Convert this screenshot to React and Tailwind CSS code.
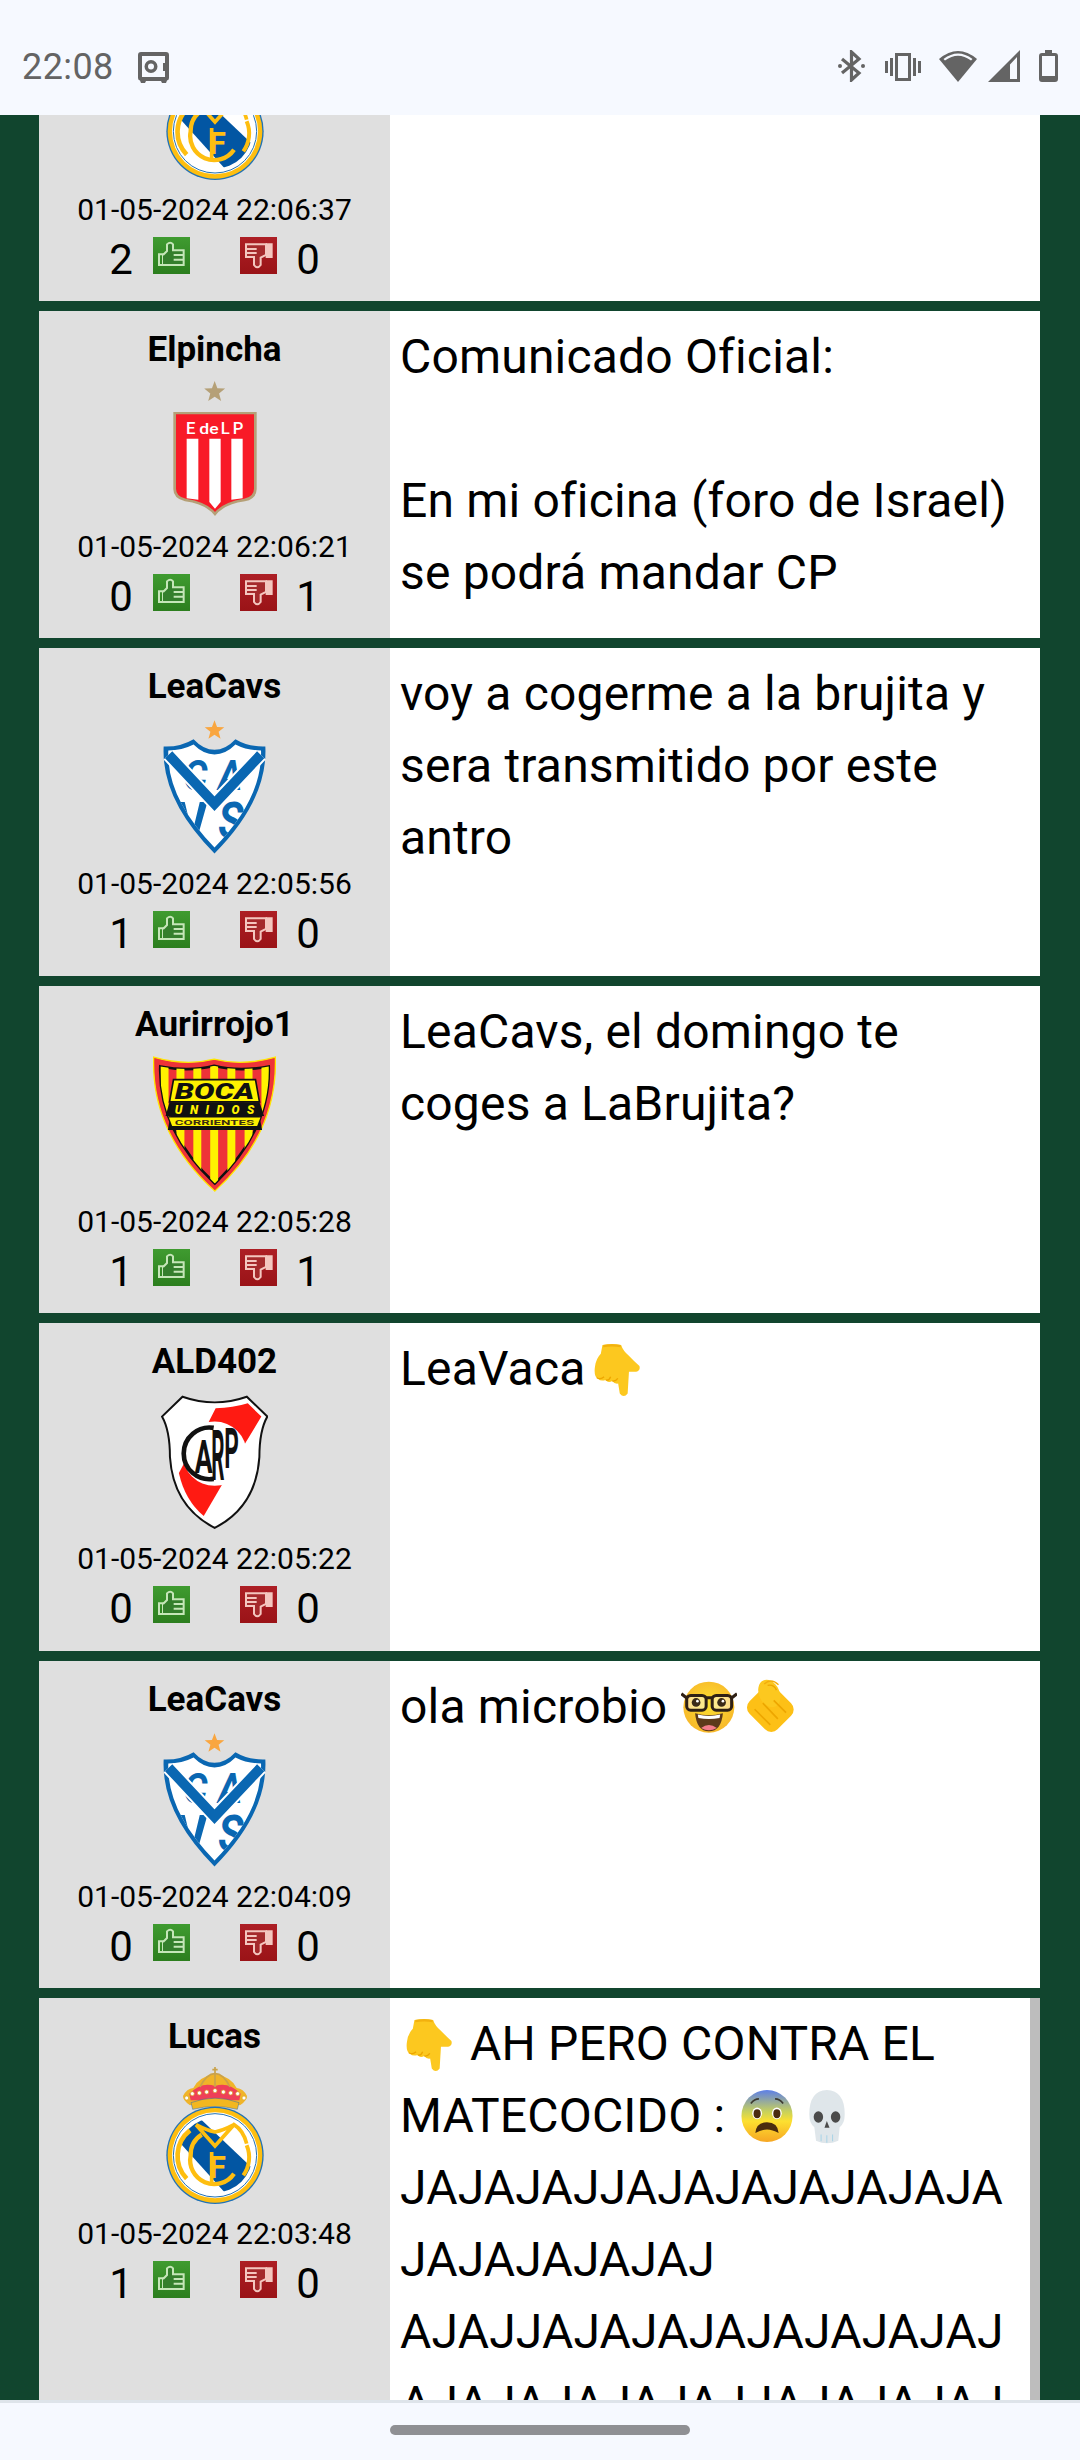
const starPts = (cx, cy, r) => {
  const p = [];
  for (let i = 0; i < 10; i++) {
    const a = -Math.PI / 2 + (i * Math.PI) / 5;
    const q = i % 2 ? r * 0.42 : r;
    p.push(`${(cx + q * Math.cos(a)).toFixed(1)},${(cy + q * Math.sin(a)).toFixed(1)}`);
  }
  return p.join(" ");
};

function RealMadrid() {
  return (
    <svg width="98" height="137" viewBox="408 205 294 411" className="block">
      <defs>
        <clipPath id="rmc"><circle cx="555" cy="470" r="112" /></clipPath>
      </defs>
      <path d="M480 320 Q458 305 459 292 Q470 270 490 268 Q505 235 555 225 Q605 235 620 268 Q640 270 651 292 Q652 305 630 320 Q555 300 480 320Z" fill="#f0b429" />
      <path d="M478 285 Q515 248 555 262 Q595 248 632 285 L628 305 L482 305Z" fill="#ef4058" />
      <path d="M510 265 Q530 225 555 225 Q580 225 600 265 M555 225 V265" fill="none" stroke="#c9a24a" strokeWidth="5" />
      <path d="M555 205 v20 M547 213 h16" stroke="#c9a24a" strokeWidth="5" />
      {[470, 487, 508, 530, 555, 580, 602, 623, 642].map((x, i) => (
        <circle key={x} cx={x} cy={[298, 285, 283, 280, 276, 280, 283, 285, 298][i]} r="6" fill="#fff" stroke="#d9a520" strokeWidth="2" />
      ))}
      <path d="M483 312 Q555 285 627 312 L622 332 Q555 315 488 332Z" fill="#f3b71f" stroke="#2f6ba8" strokeWidth="1.5" />
      <circle cx="555" cy="470" r="146" fill="#2272b5" />
      <circle cx="555" cy="470" r="142" fill="#febe10" />
      <circle cx="555" cy="470" r="129" fill="#fff" />
      <circle cx="555" cy="470" r="125" fill="none" stroke="#2272b5" strokeWidth="3" />
      <g clipPath="url(#rmc)">
        <path d="M430 410 L500 350 L690 530 L610 610Z" fill="#0256a3" />
      </g>
      <path d="M470 540 A98 98 0 0 1 480 395" fill="none" stroke="#febe10" strokeWidth="14" />
      <path d="M612 525 A72 72 0 0 1 482 470 A72 72 0 0 1 515 408" fill="none" stroke="#febe10" strokeWidth="13" />
      <path d="M498 378 L555 442 L612 378 Q640 395 650 435 M498 378 Q530 395 555 400 Q580 395 612 378" fill="none" stroke="#febe10" strokeWidth="11" />
      <path d="M640 530 A92 92 0 0 0 650 440" fill="none" stroke="#febe10" strokeWidth="12" />
      <text x="562" y="538" fontFamily="Roboto, sans-serif" fontSize="92" fontWeight="700" fill="#febe10" textAnchor="middle">F</text>
      <path d="M545 460 V560" stroke="#febe10" strokeWidth="11" />
    </svg>
  );
}

function Estudiantes() {
  return (
    <svg width="84" height="136" viewBox="430 185 250 408" className="block">
      <polygon points={starPts(554, 218, 33)} fill="#b5a077" />
      <path d="M430 278 H680 V510 Q680 538 645 546 Q580 555 555 590 Q530 555 465 546 Q430 538 430 510Z" fill="#b5a077" />
      <path d="M438 285 H672 V508 Q672 532 642 538 Q580 548 555 578 Q530 548 468 538 Q438 532 438 508Z" fill="#f81a27" />
      <path d="M470 358 H505 V541 L470 537Z M538 358 H572 V548 L555 568 L538 548Z M604 358 H638 V537 L604 541Z" fill="#fff" />
      <text x="468" y="343" fontFamily="Roboto, sans-serif" fontSize="50" fontWeight="500" fill="#fff">E</text>
      <text x="508" y="343" fontFamily="Roboto, sans-serif" fontSize="44" fontWeight="500" fill="#fff" textLength="58" lengthAdjust="spacingAndGlyphs">de</text>
      <text x="572" y="343" fontFamily="Roboto, sans-serif" fontSize="50" fontWeight="500" fill="#fff">L</text>
      <text x="608" y="343" fontFamily="Roboto, sans-serif" fontSize="50" fontWeight="500" fill="#fff">P</text>
    </svg>
  );
}

function Velez({ id }) {
  const blue = "#0a67b2";
  const ff = "Roboto, sans-serif";
  const inner = "M414 272 Q455 272 490 254 Q520 284 553 284 Q586 284 616 254 Q651 272 693 272 Q698 415 553 564 Q408 415 414 272Z";
  return (
    <svg width="103" height="135" viewBox="398 178 310 405" className="block">
      <defs><clipPath id={id}><path d={inner} /></clipPath></defs>
      <polygon points={starPts(553, 212, 31)} fill="#f9a640" />
      <path d="M400 260 Q450 262 490 238 Q520 270 553 270 Q586 270 616 238 Q656 262 706 260 Q714 420 553 582 Q392 420 400 260Z" fill={blue} />
      <path d={inner} fill="#fff" />
      <g clipPath={`url(#${id})`}>
        <text x="496" y="392" fontFamily={ff} fontSize="128" fontWeight="700" fontStyle="italic" fill={blue} textAnchor="middle" textLength="72" lengthAdjust="spacingAndGlyphs">C</text>
        <text x="600" y="392" fontFamily={ff} fontSize="128" fontWeight="700" fontStyle="italic" fill={blue} textAnchor="middle" textLength="72" lengthAdjust="spacingAndGlyphs">A</text>
        <text x="486" y="550" fontFamily={ff} fontSize="170" fontWeight="700" fill={blue} textAnchor="middle" textLength="92" lengthAdjust="spacingAndGlyphs">V</text>
        <text x="602" y="535" fontFamily={ff} fontSize="150" fontWeight="700" fontStyle="italic" fill={blue} textAnchor="middle" textLength="76" lengthAdjust="spacingAndGlyphs">S</text>
      </g>
      <path d="M415 285 L553 432 L692 285" fill="none" stroke="#fff" strokeWidth="42" />
      <path d="M415 285 L553 432 L692 285" fill="none" stroke={blue} strokeWidth="30" />
    </svg>
  );
}

function Boca() {
  const ff = "Roboto, sans-serif";
  const outer = "M372 170 Q470 198 555 176 Q640 198 740 170 Q748 400 557 575 Q364 400 372 170Z";
  const inner = "M392 198 Q480 215 555 196 Q630 215 720 198 Q726 390 557 552 Q386 390 392 198Z";
  return (
    <svg width="123" height="136" viewBox="370 168 372 408" className="block">
      <defs><clipPath id="bc"><path d={inner} /></clipPath></defs>
      <path d={outer} fill="#ee3338" stroke="#ffe600" strokeWidth="4" />
      <path d={inner} fill="#ee3338" stroke="#111" strokeWidth="8" />
      <g clipPath="url(#bc)">
        {[393, 441, 492, 543, 595, 647, 698].map((x) => (
          <rect key={x} x={x} y="190" width="24" height="380" fill="#fff200" />
        ))}
      </g>
      <path d="M432 238 H680 L692 305 H420Z" fill="#fff200" stroke="#111" strokeWidth="5" />
      <text x="556" y="295" fontFamily={ff} fontSize="68" fontWeight="900" fontStyle="italic" fill="#111" textAnchor="middle" textLength="240" lengthAdjust="spacingAndGlyphs">BOCA</text>
      <path d="M420 306 H692 L706 348 H692 L700 390 H415 L422 348 H408Z" fill="#111" />
      <text x="556" y="343" fontFamily={ff} fontSize="36" fontWeight="900" fontStyle="italic" fill="#fff200" textAnchor="middle" textLength="240" lengthAdjust="spacing">UNIDOS</text>
      <path d="M418 352 H695 L685 378 H428Z" fill="#fff200" />
      <text x="556" y="374" fontFamily={ff} fontSize="22" fontWeight="700" fill="#3a2a10" textAnchor="middle" textLength="240" lengthAdjust="spacingAndGlyphs">CORRIENTES</text>
    </svg>
  );
}

function River() {
  const ff = "Roboto, sans-serif";
  const shield = "M458 198 Q555 232 652 198 L714 258 Q690 300 690 380 Q680 530 555 594 Q430 530 420 380 Q420 300 396 258Z";
  return (
    <svg width="107" height="134" viewBox="393 194 323 402" className="block">
      <path d={shield} fill="#fff" stroke="#111" strokeWidth="6" />
      <path d="M558 233 Q610 232 655 218 L696 258 L645 342 L560 300 L535 278Z" fill="#ff1a12" />
      <path d="M462 400 L578 462 L522 558 Q465 510 447 428Z" fill="#ff1a12" />
      <circle cx="555" cy="370" r="97" fill="#fff" />
      <path d="M552 292 A78 78 0 1 0 552 446" fill="none" stroke="#111" strokeWidth="14" />
      <text x="522" y="428" fontFamily={ff} fontSize="140" fontWeight="700" fill="#111" textAnchor="middle" textLength="54" lengthAdjust="spacingAndGlyphs">A</text>
      <text x="565" y="449" fontFamily={ff} fontSize="215" fontWeight="700" fill="#111" textAnchor="middle" textLength="40" lengthAdjust="spacingAndGlyphs">R</text>
      <text x="606" y="412" fontFamily={ff} fontSize="165" fontWeight="700" fill="#111" textAnchor="middle" textLength="44" lengthAdjust="spacingAndGlyphs">P</text>
    </svg>
  );
}

function ThumbUp() {
  return (
    <svg width="37" height="37" viewBox="0 0 111 111" className="block">
      <defs>
        <linearGradient id="gu" x1="0" y1="0" x2="0" y2="1">
          <stop offset="0" stopColor="#3f9b30" />
          <stop offset="1" stopColor="#2c7e1e" />
        </linearGradient>
      </defs>
      <rect width="111" height="111" fill="url(#gu)" />
      <g className="blur-[0.7px]" fill="none" stroke="#c5e6b8" strokeWidth="6">
        <path d="M18 52 H30 V84 H18Z" />
        <path d="M30 54 L42 42 V22 Q52 12 60 22 V40 H92 V84 H30" fill="#347f2c" />
        <path d="M62 54 H92 M62 68 H92" />
      </g>
    </svg>
  );
}

function ThumbDown() {
  return (
    <svg width="37" height="37" viewBox="0 0 111 111" className="block">
      <defs>
        <linearGradient id="gd" x1="0" y1="0" x2="0" y2="1">
          <stop offset="0" stopColor="#ad1f25" />
          <stop offset="1" stopColor="#9a1317" />
        </linearGradient>
      </defs>
      <rect width="111" height="111" fill="url(#gd)" />
      <g className="blur-[0.7px]" fill="none" stroke="#f4c6bf" strokeWidth="6">
        <path d="M80 22 H95 V60 H80Z" fill="#f4c6bf" />
        <path d="M78 22 H18 V60 H42 V84 Q52 98 62 84 V62 L78 54Z" fill="#a52a2c" />
        <path d="M18 36 H50 M18 48 H50" />
      </g>
    </svg>
  );
}

function PointDown({ w = 47, h = 54, className = "" }) {
  return (
    <svg width={w} height={h} viewBox="640 62 142 165" className={className}>
      <path d="M665 68 Q695 62 722 68 Q728 86 745 100 Q762 118 778 132 Q782 146 768 150 L746 150 L742 216 Q730 232 718 216 L713 186 Q702 188 695 178 Q682 186 675 175 Q660 180 652 172 Q638 165 642 135 Q645 110 660 95Z" fill="#fcc81f" />
      <path d="M648 168 Q660 175 670 165 M675 175 Q685 178 690 165 M695 178 Q705 180 712 170" fill="none" stroke="#eda600" strokeWidth="4" />
      <path d="M668 68 Q695 64 720 68 L721 75 Q695 71 667 75Z" fill="#f2b10e" />
    </svg>
  );
}

function PointAt({ className = "" }) {
  return (
    <svg width="56" height="55" viewBox="1088 1080 164 160" className={className}>
      <rect x="1110" y="1112" width="116" height="108" rx="26" transform="rotate(45 1168 1166)" fill="#fdc016" />
      <ellipse cx="1165" cy="1122" rx="30" ry="42" transform="rotate(-25 1165 1122)" fill="#fcc81f" />
      <path d="M1150 1094 Q1170 1076 1192 1096" fill="none" stroke="#f3ad0b" strokeWidth="4" />
      <path d="M1160 1098 Q1178 1094 1186 1112" fill="none" stroke="#eda600" strokeWidth="4" />
      <path d="M1122 1168 L1168 1214 M1146 1150 L1190 1196 M1178 1142 L1214 1178" fill="none" stroke="#eda600" strokeWidth="5" />
    </svg>
  );
}

function Nerd({ className = "" }) {
  return (
    <svg width="56" height="52" viewBox="905 1082 167 155" className={className}>
      <defs>
        <radialGradient id="ng" cx="0.5" cy="0.45" r="0.6">
          <stop offset="0" stopColor="#fde030" />
          <stop offset="1" stopColor="#f7b52a" />
        </radialGradient>
      </defs>
      <circle cx="988" cy="1160" r="76" fill="url(#ng)" />
      <path d="M947 1178 Q988 1190 1030 1178 Q1025 1232 988 1232 Q952 1232 947 1178Z" fill="#5d3a1a" />
      <path d="M955 1182 Q988 1190 1022 1182 L1020 1192 Q988 1198 957 1192Z" fill="#fff" />
      <path d="M965 1222 Q988 1205 1012 1222 Q988 1236 965 1222Z" fill="#f47c8a" />
      <rect x="922" y="1125" width="58" height="44" rx="12" fill="#fff" fillOpacity="0.45" stroke="#2f2015" strokeWidth="9" />
      <rect x="998" y="1125" width="58" height="44" rx="12" fill="#fff" fillOpacity="0.45" stroke="#2f2015" strokeWidth="9" />
      <path d="M978 1132 H1000 M906 1120 L925 1135 M1072 1120 L1053 1135" stroke="#2f2015" strokeWidth="9" />
      <circle cx="950" cy="1146" r="13" fill="#3a2a18" />
      <circle cx="1026" cy="1146" r="13" fill="#3a2a18" />
      <circle cx="954" cy="1142" r="4" fill="#fff" />
      <circle cx="1030" cy="1142" r="4" fill="#fff" />
    </svg>
  );
}

function Fear({ className = "" }) {
  return (
    <svg width="52" height="52" viewBox="0 0 116 116" className={className}>
      <defs>
        <linearGradient id="fg" x1="0" y1="0" x2="0" y2="1">
          <stop offset="0" stopColor="#5d7fe8" />
          <stop offset="0.42" stopColor="#c9d25a" />
          <stop offset="0.6" stopColor="#fde030" />
          <stop offset="1" stopColor="#f6a623" />
        </linearGradient>
      </defs>
      <ellipse cx="58" cy="58" rx="57" ry="58" fill="url(#fg)" />
      <path d="M22 30 Q30 20 40 20 M94 30 Q86 20 76 20" fill="none" stroke="#3d3a30" strokeWidth="4" />
      <ellipse cx="36" cy="52" rx="11" ry="13" fill="#fff" />
      <ellipse cx="80" cy="52" rx="11" ry="13" fill="#fff" />
      <ellipse cx="36" cy="53" rx="8" ry="10" fill="#4a2c0f" />
      <ellipse cx="80" cy="53" rx="8" ry="10" fill="#4a2c0f" />
      <path d="M32 96 Q34 72 58 72 Q82 72 84 96 Q70 88 58 88 Q46 88 32 96Z" fill="#4a2c0f" />
    </svg>
  );
}

function Skull({ className = "" }) {
  return (
    <svg width="48" height="54" viewBox="0 0 105 160" className={className}>
      <path d="M52 0 Q105 2 105 72 Q105 100 90 110 L86 150 Q52 165 20 150 L15 110 Q0 100 0 72 Q0 2 52 0Z" fill="#dfe6ea" />
      <ellipse cx="27" cy="80" rx="14" ry="17" fill="#4b4b4b" />
      <ellipse cx="78" cy="80" rx="14" ry="17" fill="#4b4b4b" />
      <path d="M52 92 L60 112 H45Z" fill="#4b4b4b" />
      <path d="M35 132 V152 M52 134 V156 M69 132 V152" stroke="#a9d3e6" strokeWidth="3" />
    </svg>
  );
}

function Row({ name, crest, date, up, down, children, tall }) {
  return (
    <div className={`flex ${tall ? "h-[520px]" : "h-[327.4px]"}`}>
      <div className="w-[351px] shrink-0 bg-[#dfdfdf] flex flex-col items-center text-black pt-[19px]">
        <div className="h-[40px] leading-[40px] text-[35px] font-bold">{name}</div>
        <div className="h-[147px] flex items-end justify-center">{crest}</div>
        <div className="mt-[10px] h-[40px] leading-[40px] text-[30px] whitespace-nowrap">{date}</div>
        <div className="mt-[7px] flex items-start">
          <span className="w-[24px] text-center text-[42px] leading-[46px]">{up}</span>
          <div className="ml-[20px]"><ThumbUp /></div>
          <div className="ml-[50px]"><ThumbDown /></div>
          <span className="ml-[19px] w-[24px] text-center text-[42px] leading-[46px]">{down}</span>
        </div>
      </div>
      <div className="relative flex-1 bg-white px-[10px] pt-[10px] text-black text-[48px] leading-[72px] tracking-[0.18px] overflow-hidden whitespace-nowrap">
        {children}
      </div>
    </div>
  );
}

export default function App() {
  return (
    <div className="w-[1080px] h-[2460px] flex flex-col overflow-hidden bg-[#11452e]" style={{ fontFamily: "Roboto, 'Liberation Sans', sans-serif" }}>
      <div className="h-[115px] shrink-0 bg-[#f6f9ff] flex items-start justify-between pl-[22px] pr-[22px] pt-[50px] text-[#646464]">
        <div className="flex items-center">
          <span className="text-[36px] leading-[34px] tracking-[0.4px]">22:08</span>
          <svg width="31" height="31" viewBox="0 0 31 31" className="ml-[24px]" fill="#646464">
            <path fillRule="evenodd" d="M3 0 H28 Q31 0 31 3 V26 Q31 28 29 28.5 L28 31 H24 L23 29 H8 L7 31 H3 L2 28.5 Q0 28 0 26 V3 Q0 0 3 0Z M4 4 V25 H27 V19 H25 V11 H27 V4Z M13 8 A6.5 6.5 0 1 0 13 21 A6.5 6.5 0 1 0 13 8Z M13 11.5 A3 3 0 1 1 13 17.5 A3 3 0 1 1 13 11.5Z" />
          </svg>
        </div>
        <div className="flex items-start">
          <svg width="27" height="32" viewBox="0 0 27 32" fill="none" stroke="#646464" strokeWidth="3.2">
            <path d="M4 9 L21 23 L13.5 30 V2 L21 9 L4 23" />
            <circle cx="2" cy="16" r="2" fill="#646464" stroke="none" />
            <circle cx="25" cy="16" r="2" fill="#646464" stroke="none" />
          </svg>
          <svg width="36" height="28" viewBox="0 0 36 28" className="ml-[20px] mt-[3px]" fill="#646464">
            <path fillRule="evenodd" d="M10 0 H26 V28 H10Z M13 3 V25 H23 V3Z" />
            <rect x="5" y="5" width="3" height="18" />
            <rect x="28" y="5" width="3" height="18" />
            <rect x="0" y="8" width="3" height="12" />
            <rect x="33" y="8" width="3" height="12" />
          </svg>
          <svg width="38" height="32" viewBox="0 0 38 32" className="ml-[18px]" fill="#646464">
            <path d="M19 32 L0 9 Q19 -7 38 9Z M19 32" />
            <path d="M4.5 9 Q19 -2 33.5 9 L32 10.5 Q19 1 6 10.5Z" fill="#f6f9ff" />
          </svg>
          <svg width="32" height="32" viewBox="0 0 32 32" className="ml-[11px]" fill="#646464">
            <path fillRule="evenodd" d="M32 0 V32 H0Z M29 7 L22 14.5 V29 H29Z" />
          </svg>
          <svg width="19" height="32" viewBox="0 0 19 32" className="ml-[19px]" fill="#646464">
            <path fillRule="evenodd" d="M6 0 H13 V3 H16 Q19 3 19 6 V29 Q19 32 16 32 H3 Q0 32 0 29 V6 Q0 3 3 3 H6Z M3 6 V26 H16 V6Z" />
          </svg>
        </div>
      </div>

      <div className="flex-1 min-h-0 overflow-hidden pl-[39px] pr-[40px]">
        <div className="-mt-[141.4px] flex flex-col gap-[10px]">
          <Row name="Lucas" crest={<RealMadrid />} date="01-05-2024 22:06:37" up="2" down="0" />
          <Row name="Elpincha" crest={<Estudiantes />} date="01-05-2024 22:06:21" up="0" down="1">
            Comunicado Oficial:<br /><br />En mi oficina (foro de Israel)<br />se podrá mandar CP
          </Row>
          <Row name="LeaCavs" crest={<Velez id="vz1" />} date="01-05-2024 22:05:56" up="1" down="0">
            voy a cogerme a la brujita y<br />sera transmitido por este<br />antro
          </Row>
          <Row name="Aurirrojo1" crest={<Boca />} date="01-05-2024 22:05:28" up="1" down="1">
            LeaCavs, el domingo te<br />coges a LaBrujita?
          </Row>
          <Row name="ALD402" crest={<River />} date="01-05-2024 22:05:22" up="0" down="0">
            LeaVaca<PointDown className="inline-block align-[-12px] ml-[8px]" />
          </Row>
          <Row name="LeaCavs" crest={<Velez id="vz2" />} date="01-05-2024 22:04:09" up="0" down="0">
            ola microbio <Nerd className="inline-block align-[-10px] ml-[2px]" /><PointAt className="inline-block align-[-11px] ml-[6px]" />
          </Row>
          <Row tall name="Lucas" crest={<RealMadrid />} date="01-05-2024 22:03:48" up="1" down="0">
            <PointDown className="inline-block align-[-12px] ml-[6px] mr-[5px]" /> AH PERO CONTRA EL<br />
            MATECOCIDO : <Fear className="inline-block align-[-10px] ml-[4px]" /><Skull className="inline-block align-[-12px] ml-[10px]" /><br />
            JAJAJAJJAJAJAJAJAJAJA<br />
            JAJAJAJAJAJ<br />
            AJAJJAJAJAJAJAJAJAJAJ<br />
            AJAJAJAJAJAJJAJAJAJAJ
            <div className="absolute top-0 right-0 bottom-0 w-[10px] bg-[#bdbdbd]" />
          </Row>
        </div>
      </div>

      <div className="h-[60px] shrink-0 bg-[#f6f9ff] border-t-[3px] border-[#dee4ea] flex justify-center pt-[22px]">
        <div className="w-[300px] h-[10px] rounded-full bg-[#8f9094]" />
      </div>
    </div>
  );
}
